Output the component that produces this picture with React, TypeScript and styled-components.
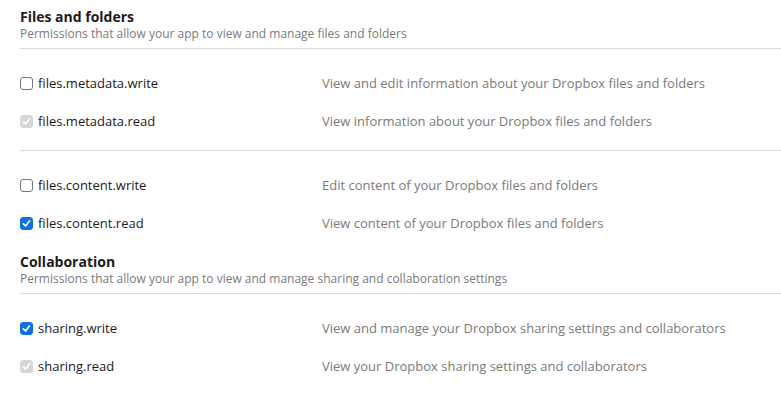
import React from 'react';
import styled, { createGlobalStyle } from 'styled-components';

type CheckState = 'off' | 'on' | 'locked';

interface Scope {
  name: string;
  description: string;
  state: CheckState;
}

interface Section {
  title: string;
  subtitle: string;
  groups: Scope[][];
}

const sections: Section[] = [
  {
    title: 'Files and folders',
    subtitle: 'Permissions that allow your app to view and manage files and folders',
    groups: [
      [
        { name: 'files.metadata.write', description: 'View and edit information about your Dropbox files and folders', state: 'off' },
        { name: 'files.metadata.read', description: 'View information about your Dropbox files and folders', state: 'locked' },
      ],
      [
        { name: 'files.content.write', description: 'Edit content of your Dropbox files and folders', state: 'off' },
        { name: 'files.content.read', description: 'View content of your Dropbox files and folders', state: 'on' },
      ],
    ],
  },
  {
    title: 'Collaboration',
    subtitle: 'Permissions that allow your app to view and manage sharing and collaboration settings',
    groups: [
      [
        { name: 'sharing.write', description: 'View and manage your Dropbox sharing settings and collaborators', state: 'on' },
        { name: 'sharing.read', description: 'View your Dropbox sharing settings and collaborators', state: 'locked' },
      ],
    ],
  },
];

const GlobalStyle = createGlobalStyle`
  body {
    margin: 0;
    background: #ffffff;
    font-family: "Open Sans", "Noto Sans", sans-serif;
  }
`;

const Page = styled.div`
  padding: 7px 0 0 20px;
`;

const SectionBlock = styled.section`
  display: flex;
  flex-direction: column;
`;

const Header = styled.div`
  padding-bottom: 6px;
  border-bottom: 1px solid #d9d9d9;
`;

const Title = styled.h3`
  margin: 0;
  font-size: 14px;
  line-height: 19px;
  font-weight: 700;
  color: #1e1919;
`;

const Subtitle = styled.p`
  margin: 0;
  font-size: 12px;
  line-height: 16px;
  color: #7a7a7a;
`;

const Group = styled.div<{ $divided: boolean }>`
  padding: 15px 0 10px;
  border-bottom: ${p => (p.$divided ? '1px solid #d9d9d9' : 'none')};
`;

const Row = styled.label`
  display: grid;
  grid-template-columns: 302px 1fr;
  align-items: center;
  height: 38px;
`;

const ScopeName = styled.span`
  display: flex;
  align-items: center;
  gap: 5px;
  font-size: 13px;
  color: #1e1919;
`;

const Box = styled.span<{ $state: CheckState }>`
  box-sizing: border-box;
  width: 13px;
  height: 13px;
  border-radius: 3px;
  display: inline-flex;
  align-items: center;
  justify-content: center;
  border: 1px solid
    ${p => (p.$state === 'off' ? '#767676' : p.$state === 'on' ? '#0f6fe6' : '#d6d6d6')};
  background: ${p => (p.$state === 'off' ? '#ffffff' : p.$state === 'on' ? '#0f6fe6' : '#d6d6d6')};

  svg {
    display: block;
  }
`;

const Description = styled.span`
  font-size: 13px;
  color: #7a7a7a;
`;

const Check: React.FC<{ state: CheckState }> = ({ state }) => (
  <Box $state={state}>
    {state !== 'off' && (
      <svg width="9" height="9" viewBox="0 0 9 9">
        <path
          d="M1.4 4.8 L3.6 7 L7.6 1.8"
          fill="none"
          stroke="#ffffff"
          strokeWidth="1.7"
          strokeLinecap="round"
          strokeLinejoin="round"
        />
      </svg>
    )}
  </Box>
);

export default function App() {
  return (
    <>
      <GlobalStyle />
      <Page>
        {sections.map(section => (
          <SectionBlock key={section.title}>
            <Header>
              <Title>{section.title}</Title>
              <Subtitle>{section.subtitle}</Subtitle>
            </Header>
            {section.groups.map((group, i) => (
              <Group key={i} $divided={i < section.groups.length - 1}>
                {group.map(scope => (
                  <Row key={scope.name}>
                    <ScopeName>
                      <Check state={scope.state} />
                      {scope.name}
                    </ScopeName>
                    <Description>{scope.description}</Description>
                  </Row>
                ))}
              </Group>
            ))}
          </SectionBlock>
        ))}
      </Page>
    </>
  );
}
